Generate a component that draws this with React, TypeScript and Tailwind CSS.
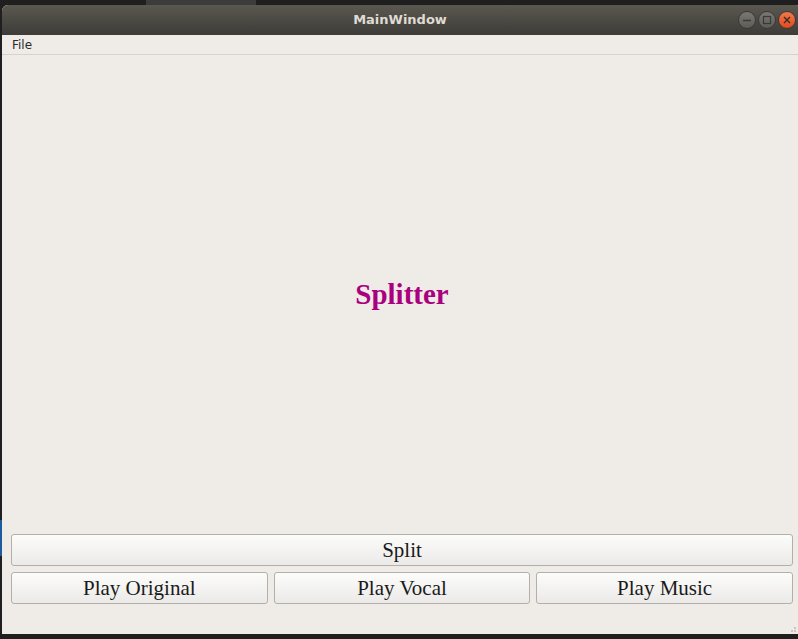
import React from "react";

function TitleButton({ kind }: { kind: "min" | "max" | "close" }) {
  if (kind === "close") {
    return (
      <div className="w-[18px] h-[18px] rounded-full bg-gradient-to-b from-[#f4774a] to-[#df4a1a] border border-[#3a3935] flex items-center justify-center">
        <svg width="8" height="8" viewBox="0 0 8 8">
          <path d="M1 1L7 7M7 1L1 7" stroke="#3c2a20" strokeWidth="1.4" />
        </svg>
      </div>
    );
  }
  return (
    <div className="w-[18px] h-[18px] rounded-full bg-gradient-to-b from-[#7a7872] to-[#5e5c57] border border-[#3a3935] flex items-center justify-center">
      {kind === "min" ? (
        <svg width="10" height="10" viewBox="0 0 10 10">
          <path d="M1 5.5H9" stroke="#3a3935" strokeWidth="1.3" />
        </svg>
      ) : (
        <svg width="10" height="10" viewBox="0 0 10 10">
          <rect x="1.5" y="1.5" width="7" height="7" fill="none" stroke="#3a3935" strokeWidth="1.2" />
        </svg>
      )}
    </div>
  );
}

function QtButton({ label, className = "" }: { label: string; className?: string }) {
  return (
    <button
      className={
        "h-[32px] rounded-[3px] border border-[#b3afaa] bg-gradient-to-b from-[#fcfcfb] to-[#ebeae8] text-[21px] leading-none text-[#1a1a1a] flex items-center justify-center " +
        className
      }
      style={{ fontFamily: '"Liberation Serif", "Times New Roman", serif' }}
    >
      {label}
    </button>
  );
}

export default function App() {
  return (
    <div className="w-[798px] h-[639px] bg-[#1f1f1f] relative overflow-hidden">
      {/* background desktop hints */}
      <div className="absolute left-0 top-0 w-[798px] h-[6px] overflow-hidden">
        <div className="absolute left-[146px] top-0 w-[110px] h-[6px] bg-[#3c3c3c]" />
      </div>
      <div className="absolute left-0 top-[520px] w-[2px] h-[36px] bg-[#1d5aa0]" />

      <div className="absolute left-[2px] top-[5px] w-[800px] h-[629px] flex flex-col rounded-t-[6px] overflow-hidden bg-[#efebe7]">
        {/* title bar */}
        <div className="h-[30px] shrink-0 bg-gradient-to-b from-[#5b5850] to-[#3d3c38] flex items-center relative">
          <div
            className="absolute left-0 right-[4px] text-center font-bold text-[#dfdbd2]"
            style={{ fontFamily: '"DejaVu Sans", "Liberation Sans", sans-serif', fontSize: "13px" }}
          >
            MainWindow
          </div>
          <div className="absolute right-[6px] top-[6px] flex gap-[2px]">
            <TitleButton kind="min" />
            <TitleButton kind="max" />
            <TitleButton kind="close" />
          </div>
        </div>
        {/* menu bar */}
        <div className="h-[20px] shrink-0 border-b border-[#d6d2cd] flex items-center px-[10px]">
          <span
            className="text-[12px] text-[#2b2b2b]"
            style={{ fontFamily: '"DejaVu Sans", "Noto Sans", sans-serif' }}
          >
            File
          </span>
        </div>
        {/* central */}
        <div className="flex-1 flex flex-col px-[9px]">
          <div className="flex-1 flex items-center justify-center">
            <span
              className="text-[29px] font-bold text-[#aa007f]"
              style={{ fontFamily: '"Liberation Serif", "Times New Roman", serif' }}
            >
              Splitter
            </span>
          </div>
          <div className="flex flex-col gap-[6px] pb-[30px]">
            <QtButton label="Split" />
            <div className="grid grid-cols-3 gap-[6px]">
              <QtButton label="Play Original" />
              <QtButton label="Play Vocal" />
              <QtButton label="Play Music" />
            </div>
          </div>
        </div>
        {/* resize grip */}
        <div className="absolute right-[6px] bottom-[2px] w-[8px] h-[8px]">
          <div className="absolute right-0 bottom-0 w-[2px] h-[2px] bg-[#c9c5c0]" />
          <div className="absolute right-[3px] bottom-0 w-[2px] h-[2px] bg-[#c9c5c0]" />
          <div className="absolute right-0 bottom-[3px] w-[2px] h-[2px] bg-[#c9c5c0]" />
        </div>
      </div>
    </div>
  );
}
